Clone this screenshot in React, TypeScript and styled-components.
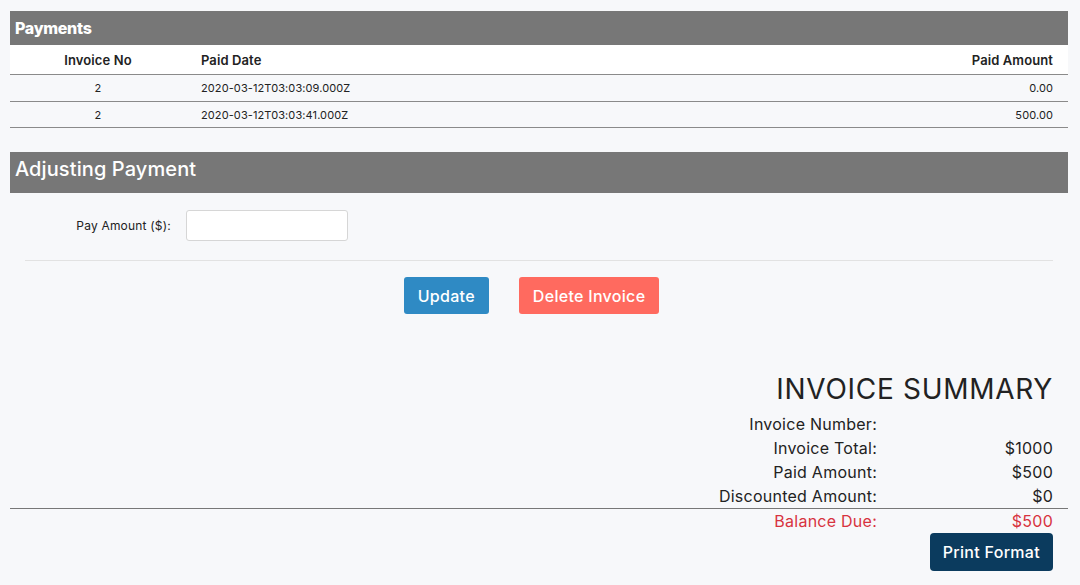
import styled, { createGlobalStyle } from 'styled-components';

const Global = createGlobalStyle`
  body {
    margin: 0;
    background: #f7f8fa;
    font-family: Inter, "Open Sans", sans-serif;
    color: #222;
  }
`;

const Page = styled.div`
  padding: 11px 12px 14px 10px;
`;

const SectionBar = styled.div<{ big?: boolean }>`
  background: #777777;
  color: #fff;
  height: ${({ big }) => (big ? '41px' : '34px')};
  box-sizing: border-box;
  display: flex;
  align-items: center;
  padding: ${({ big }) => (big ? '0 0 7px 5px' : '0 0 0 5px')};
  font-size: ${({ big }) => (big ? '20px' : '16px')};
  font-weight: ${({ big }) => (big ? 500 : 800)};
  letter-spacing: ${({ big }) => (big ? '0.1px' : '-0.3px')};
`;

const Row = styled.div<{ head?: boolean }>`
  display: grid;
  grid-template-columns: 176px 1fr 200px;
  align-items: center;
  height: ${({ head }) => (head ? '29px' : '26px')};
  background: ${({ head }) => (head ? '#fff' : 'transparent')};
  border-bottom: 1px solid #8a8a8a;
  font-size: ${({ head }) => (head ? '13px' : '11px')};
  font-weight: ${({ head }) => (head ? 600 : 400)};
  letter-spacing: 0.1px;

  &:last-of-type {
    height: 25px;
  }
`;

const Cell = styled.div<{ align: 'left' | 'center' | 'right' }>`
  text-align: ${({ align }) => align};
  padding: ${({ align }) => (align === 'left' ? '0 0 0 15px' : align === 'right' ? '0 15px 0 0' : '0')};
`;

const Adjust = styled.section`
  margin-top: 24px;
`;

const FormRow = styled.div`
  display: flex;
  align-items: center;
  gap: 15px;
  margin-top: 17px;
`;

const Label = styled.label`
  width: 161px;
  text-align: right;
  font-size: 12px;
  letter-spacing: 0.2px;
`;

const Input = styled.input`
  width: 162px;
  height: 31px;
  box-sizing: border-box;
  border: 1px solid #d6d6d6;
  border-radius: 3px;
  background: #fff;
`;

const Divider = styled.hr`
  border: none;
  border-top: 1px solid #e2e2e2;
  margin: 19px 15px 16px;
`;

const Buttons = styled.div`
  display: flex;
  justify-content: center;
  gap: 30px;
  padding-right: 15px;
`;

const Button = styled.button<{ tone: string }>`
  background: ${({ tone }) => tone};
  color: #fff;
  border: none;
  border-radius: 3px;
  font-family: inherit;
  font-size: 16px;
  font-weight: 500;
  letter-spacing: 0.3px;
  height: 37px;
  padding: 0 14px;
`;

const Summary = styled.section`
  margin-top: 58px;
`;

const SummaryTitle = styled.h2`
  margin: 0 15px 6px 0;
  text-align: right;
  font-size: 28px;
  font-weight: 400;
  letter-spacing: 0.7px;
  line-height: 34px;
`;

const SumRow = styled.div<{ due?: boolean }>`
  display: grid;
  grid-template-columns: 1fr 176px;
  padding-right: 15px;
  font-size: 16px;
  line-height: 24px;
  letter-spacing: 0.25px;
  color: ${({ due }) => (due ? '#d7333f' : '#222')};
  text-align: right;
`;

const SumLine = styled.hr`
  border: none;
  border-top: 1px solid #777;
  margin: 0;
`;

const PrintRow = styled.div`
  display: flex;
  justify-content: flex-end;
  padding: 0 15px 0 0;
`;

const PrintButton = styled(Button)`
  height: 38px;
  border-radius: 4px;
  padding: 0 13px;
`;

const payments = [
  { no: 2, date: '2020-03-12T03:03:09.000Z', amount: '0.00' },
  { no: 2, date: '2020-03-12T03:03:41.000Z', amount: '500.00' },
];

const summary = [
  ['Invoice Number:', ''],
  ['Invoice Total:', '$1000'],
  ['Paid Amount:', '$500'],
  ['Discounted Amount:', '$0'],
];

export default function App() {
  return (
    <Page>
      <Global />
      <section>
        <SectionBar>Payments</SectionBar>
        <Row head>
          <Cell align='center'>Invoice No</Cell>
          <Cell align='left'>Paid Date</Cell>
          <Cell align='right'>Paid Amount</Cell>
        </Row>
        {payments.map((p) => (
          <Row key={p.date}>
            <Cell align='center'>{p.no}</Cell>
            <Cell align='left'>{p.date}</Cell>
            <Cell align='right'>{p.amount}</Cell>
          </Row>
        ))}
      </section>

      <Adjust>
        <SectionBar big>Adjusting Payment</SectionBar>
        <FormRow>
          <Label>Pay Amount ($):</Label>
          <Input type='text' />
        </FormRow>
        <Divider />
        <Buttons>
          <Button tone='#2f8ac4'>Update</Button>
          <Button tone='#ff6a5f'>Delete Invoice</Button>
        </Buttons>
      </Adjust>

      <Summary>
        <SummaryTitle>INVOICE SUMMARY</SummaryTitle>
        {summary.map(([label, value]) => (
          <SumRow key={label}>
            <span>{label}</span>
            <span>{value}</span>
          </SumRow>
        ))}
        <SumLine />
        <SumRow due>
          <span>Balance Due:</span>
          <span>$500</span>
        </SumRow>
        <PrintRow>
          <PrintButton tone='#0b3b5e'>Print Format</PrintButton>
        </PrintRow>
      </Summary>
    </Page>
  );
}
